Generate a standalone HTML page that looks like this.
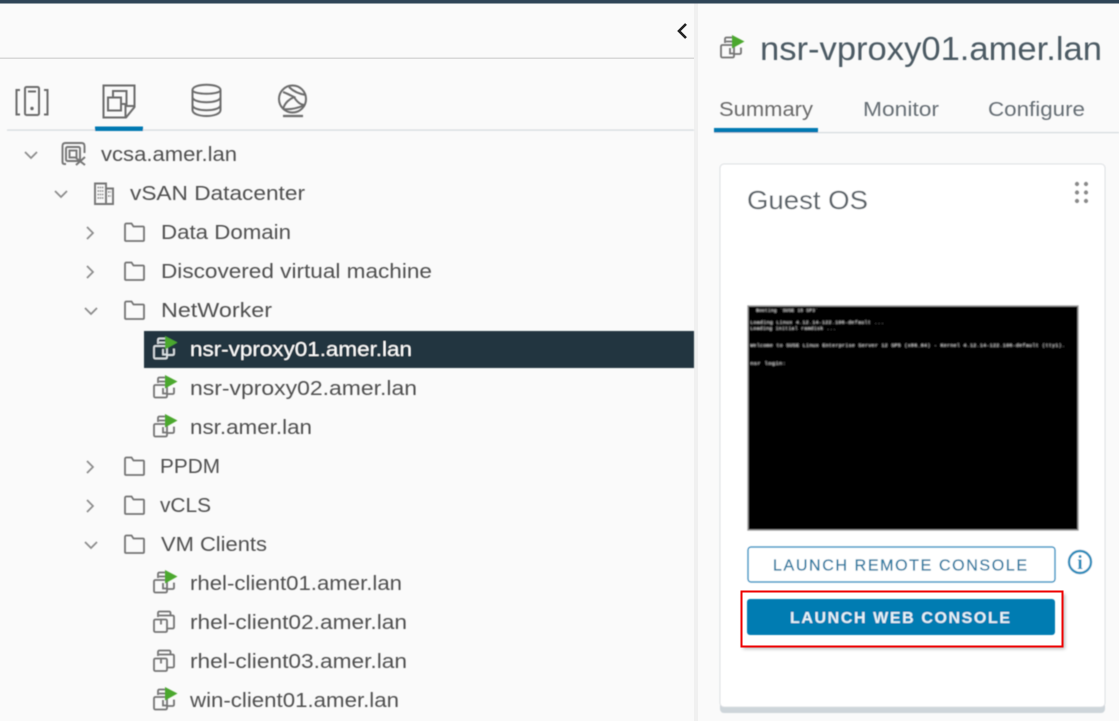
<!DOCTYPE html>
<html><head><meta charset="utf-8"><title>nsr-vproxy01.amer.lan</title>
<style>
html,body{margin:0;padding:0;background:#fafafa;width:1119px;height:721px;overflow:hidden}
svg{display:block;font-family:"Liberation Sans",sans-serif}
.t{font-size:20px;fill:#505050}
.i{fill:none;stroke:#737373;stroke-width:1.800}
.ch{fill:none;stroke:#8a8a8a;stroke-width:1.700}
</style></head><body>
<svg width="1119" height="721" viewBox="0 0 1119 721" xmlns="http://www.w3.org/2000/svg">
<defs>
<filter id="s" x="-5%" y="-5%" width="110%" height="110%"><feGaussianBlur stdDeviation="0.45"/></filter>
<filter id="b" x="-5%" y="-30%" width="110%" height="160%"><feGaussianBlur stdDeviation="0.8"/></filter>
<filter id="sh" x="-5%" y="-20%" width="110%" height="140%"><feGaussianBlur stdDeviation="1.500"/></filter>
<symbol id="vm" viewBox="0 0 24 26" width="24" height="26" overflow="visible">
<path class="i" d="M5 7V3Q5 1.500 6.500 1.500H16Q17.500 1.500 17.500 3V5.500"/>
<path class="i" d="M6 5.500H19.500Q21 5.500 21 7V17Q21 18.500 19.500 18.500H14.500"/>
<path class="i" d="M2.500 9.500H12.500Q14 9.500 14 11V20.500Q14 22 12.500 22H2.500Q1 22 1 20.500V11Q1 9.500 2.500 9.500Z"/>
<path class="i" d="M8 9.500V14.500"/>
</symbol>
<symbol id="vmp" viewBox="0 0 24 26" width="24" height="26" overflow="visible">
<path class="i" d="M5 8V4Q5 2.500 6.500 2.500H12"/>
<path class="i" d="M6 6.500H12M20 13.500H21V17.500Q21 19 19.500 19H14.500"/>
<path class="i" d="M2.500 10H12.500Q14 10 14 11.500V21Q14 22.500 12.500 22.500H2.500Q1 22.500 1 21V11.500Q1 10 2.500 10Z"/>
<path class="i" d="M10 13V18.500H14"/>
<path d="M12 0L24.500 6.500L12 13.500Z" fill="#4ca82e"/>
</symbol>
<symbol id="vmw" viewBox="0 0 24 26" width="24" height="26" overflow="visible">
<path d="M5 8V4Q5 2.500 6.500 2.500H12M6 6.500H12M20 13.500H21V17.500Q21 19 19.500 19H14.500M2.500 10H12.500Q14 10 14 11.500V21Q14 22.500 12.500 22.500H2.500Q1 22.500 1 21V11.500Q1 10 2.500 10ZM10 13V18.500H14" fill="none" stroke="#dfe5e8" stroke-width="1.700"/>
<path d="M12 0L24.500 6.500L12 13.500Z" fill="#4ca82e"/>
</symbol>
<symbol id="fd" viewBox="0 0 22 20" width="22" height="20" overflow="visible">
<path class="i" d="M2 3Q2 1.500 3.500 1.500H8.500L10.500 4.500H20Q21 4.500 21 5.500V18Q21 19 20 19H3Q2 19 2 18Z"/>
</symbol>
</defs>

<rect width="1119" height="721" fill="#fafafa"/>
<rect width="1119" height="3.500" fill="#2f4557"/>
<rect x="694" y="3.500" width="4" height="718" fill="#f0f0f0"/>
<rect x="0" y="57.500" width="694" height="1.500" fill="#d8d8d8"/>
<path d="M686 24L679 31L686 38" fill="none" stroke="#222" stroke-width="2.600"/>

<g filter="url(#s)">
<!-- nav tabs -->
<rect x="7" y="129.500" width="687" height="1.200" fill="#d4dade"/>
<rect x="95" y="126.500" width="48" height="4.500" fill="#0079b2"/>
<g fill="none" stroke="#6a6a6a" stroke-width="2">
<path d="M20 90H16.500V114.500H20M44 90H47.500V114.500H44"/>
<rect x="25" y="87" width="14" height="28" rx="1.500"/>
<path d="M28 91.500H36"/>
<path d="M103.500 85.500H134.500V107L126 117.500H103.500Z M134.500 106H125.500V117"/>
<rect x="108" y="97.500" width="13" height="13" />
<path d="M113 97.500V91H126.500V104H121"/>
<path d="M192.500 90C192.500 83 220.500 83 220.500 90V110C220.500 118 192.500 118 192.500 110Z M192.500 90C192.500 95 220.500 95 220.500 90M192.500 97C192.500 104 220.500 104 220.500 97M192.500 105C192.500 112 220.500 112 220.500 105"/>
<circle cx="292.500" cy="99" r="13.500"/>
<path d="M283 109C285 102 290 99 294 97C290 95 286 93 283 92M294 97C297 102 301 105 305 105M289 87C293 91 299 94 306 95M283 109C290 110 298 108 305 105"/>
<path d="M283 116H303" stroke-width="2.200"/>
</g>
<circle cx="32" cy="108.500" r="1.700" fill="#666"/>

<!-- chevrons -->
<path class="ch" d="M25 152L31 158L37 152M55 191L61 197L67 191M85 308L91 314L97 308M85 542L91 548L97 542"/>
<path class="ch" d="M87 227L93 233L87 239M87 266L93 272L87 278M87 461L93 467L87 473M87 500L93 506L87 512"/>

<!-- root icons -->
<g fill="none" stroke="#757575" stroke-width="1.900">
<path d="M66 164H64.500Q62.500 164 62.500 162V146Q62.500 143 65.500 143H81.500Q84.500 143 84.500 146V153"/>
<rect x="66" y="147" width="14" height="14" rx="1.500"/>
<rect x="69.500" y="150.500" width="7" height="7"/>
<path d="M76 158L85 165M85 157L76 165"/>
<path d="M95 204V183.500H106V204ZM106 188.500H113V204H95"/>
</g>
<path d="M97.500 187.500H103.500M97.500 191H103.500M97.500 194.500H103.500M97.500 198H103.500M108 192H111M108 196H111" stroke="#888" stroke-width="1.500" stroke-dasharray="1.500 .7" fill="none"/>

<use href="#fd" x="123" y="222"/><use href="#fd" x="123" y="261"/><use href="#fd" x="123" y="300"/>
<use href="#fd" x="123" y="456"/><use href="#fd" x="123" y="495"/><use href="#fd" x="123" y="534"/>

<!-- selection -->
<rect x="144" y="331" width="550" height="37" fill="#22343f"/>
<use href="#vmw" x="153" y="336"/>
<use href="#vmp" x="153" y="375"/>
<use href="#vmp" x="153" y="414"/>
<use href="#vmp" x="153" y="570"/>
<use href="#vm" x="153" y="610"/>
<use href="#vm" x="153" y="649"/>
<use href="#vmp" x="153" y="687"/>

<!-- tree text -->
<text class="t" x="101" y="161" textLength="136" lengthAdjust="spacingAndGlyphs">vcsa.amer.lan</text>
<text class="t" x="130" y="200" textLength="175" lengthAdjust="spacingAndGlyphs">vSAN Datacenter</text>
<text class="t" x="161" y="239" textLength="130" lengthAdjust="spacingAndGlyphs">Data Domain</text>
<text class="t" x="161" y="278" textLength="271" lengthAdjust="spacingAndGlyphs">Discovered virtual machine</text>
<text class="t" x="161" y="317" textLength="111" lengthAdjust="spacingAndGlyphs">NetWorker</text>
<text class="t" x="190" y="356" textLength="222" lengthAdjust="spacingAndGlyphs" style="fill:#fff">nsr-vproxy01.amer.lan</text>
<text class="t" x="190" y="395" textLength="227" lengthAdjust="spacingAndGlyphs">nsr-vproxy02.amer.lan</text>
<text class="t" x="190" y="434" textLength="122" lengthAdjust="spacingAndGlyphs">nsr.amer.lan</text>
<text class="t" x="160" y="473" textLength="60" lengthAdjust="spacingAndGlyphs">PPDM</text>
<text class="t" x="160" y="512" textLength="51" lengthAdjust="spacingAndGlyphs">vCLS</text>
<text class="t" x="161" y="551" textLength="106" lengthAdjust="spacingAndGlyphs">VM Clients</text>
<text class="t" x="190" y="590" textLength="212" lengthAdjust="spacingAndGlyphs">rhel-client01.amer.lan</text>
<text class="t" x="190" y="629" textLength="217" lengthAdjust="spacingAndGlyphs">rhel-client02.amer.lan</text>
<text class="t" x="190" y="668" textLength="217" lengthAdjust="spacingAndGlyphs">rhel-client03.amer.lan</text>
<text class="t" x="190" y="707" textLength="209" lengthAdjust="spacingAndGlyphs">win-client01.amer.lan</text>

<!-- right header -->
<use href="#vmp" x="720" y="35"/>
<text x="760" y="60" font-size="33" fill="#4c5a64" textLength="342" lengthAdjust="spacingAndGlyphs">nsr-vproxy01.amer.lan</text>
<rect x="714" y="132" width="405" height="1.200" fill="#d4dade"/>
<rect x="714" y="128" width="104" height="4.500" fill="#0079b2"/>
<text x="719" y="116" font-size="20" fill="#6a6a6a" textLength="94" lengthAdjust="spacingAndGlyphs">Summary</text>
<text x="863" y="116" font-size="20" fill="#666e75" textLength="76" lengthAdjust="spacingAndGlyphs">Monitor</text>
<text x="988" y="116" font-size="20" fill="#666e75" textLength="97" lengthAdjust="spacingAndGlyphs">Configure</text>

<!-- card -->
<rect x="720" y="164" width="385" height="549" rx="4" fill="#ced5da"/>
<rect x="720" y="164" width="385" height="543" rx="4" fill="#fff" stroke="#dcdfe2" stroke-width="1"/>
<text x="747" y="209" font-size="26" fill="#5c6369" textLength="121" lengthAdjust="spacingAndGlyphs">Guest OS</text>
<g fill="#8a8a8a"><circle cx="1077" cy="184" r="2.200"/><circle cx="1086" cy="184" r="2.200"/><circle cx="1077" cy="192.500" r="2.200"/><circle cx="1086" cy="192.500" r="2.200"/><circle cx="1077" cy="201" r="2.200"/><circle cx="1086" cy="201" r="2.200"/></g>

<!-- console -->
<rect x="748" y="306" width="330" height="224" fill="#000" stroke="#9a9a9a" stroke-width="1.500"/>
<g font-size="5" fill="#f0f0f0" filter="url(#b)" font-family="Liberation Mono" font-weight="bold">
<text x="756" y="312" textLength="62" lengthAdjust="spacingAndGlyphs">Booting `SUSE 15 SP3`</text>
<text x="750" y="324" textLength="134" lengthAdjust="spacingAndGlyphs">Loading Linux 4.12.14-122.106-default ...</text>
<text x="750" y="330" textLength="86" lengthAdjust="spacingAndGlyphs">Loading initial ramdisk ...</text>
<text x="750" y="347" textLength="315" lengthAdjust="spacingAndGlyphs">Welcome to SUSE Linux Enterprise Server 12 SP5 (x86_64) - Kernel 4.12.14-122.106-default (tty1).</text>
<text x="750" y="365" textLength="36" lengthAdjust="spacingAndGlyphs">nsr login:</text>
</g>

<!-- buttons -->
<rect x="748" y="547" width="307" height="35" rx="3" fill="#fff" stroke="#2f95c4" stroke-width="1.500"/>
<text x="773" y="570.500" font-size="16" fill="#2f7da3" stroke="#2f7da3" stroke-width=".3" textLength="254" lengthAdjust="spacing">LAUNCH REMOTE CONSOLE</text>
<circle cx="1080" cy="562" r="11" fill="none" stroke="#2b8dbb" stroke-width="2.400"/>
<text x="1080" y="569" font-size="20" font-weight="bold" fill="#2b8dbb" text-anchor="middle" font-family="Liberation Serif">i</text>

<rect x="743" y="594" width="322" height="55" fill="#8a8a8a" opacity=".6" filter="url(#sh)"/>
</g>
<rect x="741.500" y="591.500" width="321" height="55" fill="#fff" stroke="#ee0000" stroke-width="2"/>
<g filter="url(#s)">
<rect x="747" y="599" width="308" height="36" rx="3" fill="#007cb2"/>
<text x="790" y="623" font-size="16" font-weight="bold" fill="#e8f2f7" textLength="220" lengthAdjust="spacing">LAUNCH WEB CONSOLE</text>
</g>
</svg>
</body></html>
